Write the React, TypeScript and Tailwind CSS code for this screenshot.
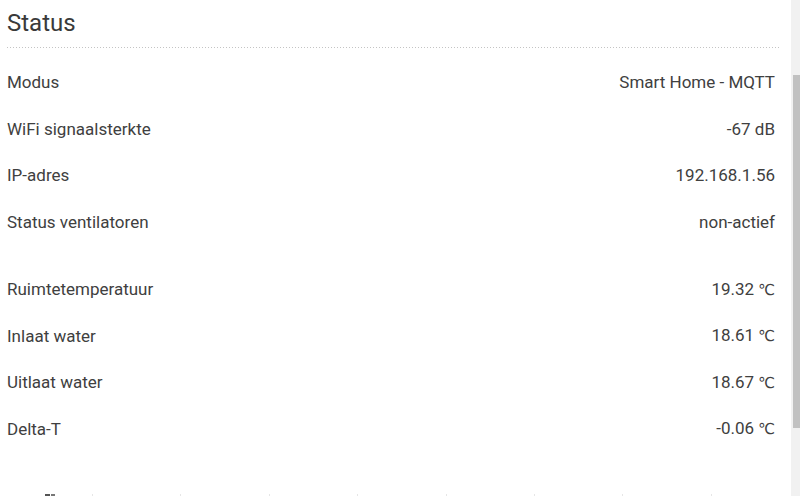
import React from 'react';

interface Row {
  label: string;
  value: string;
  unit?: string;
}

const general: Row[] = [
  { label: 'Modus', value: 'Smart Home - MQTT' },
  { label: 'WiFi signaalsterkte', value: '-67 dB' },
  { label: 'IP-adres', value: '192.168.1.56' },
  { label: 'Status ventilatoren', value: 'non-actief' },
];

const temps: Row[] = [
  { label: 'Ruimtetemperatuur', value: '19.32', unit: '℃' },
  { label: 'Inlaat water', value: '18.61', unit: '℃' },
  { label: 'Uitlaat water', value: '18.67', unit: '℃' },
  { label: 'Delta-T', value: '-0.06', unit: '℃' },
];

const StatusRow: React.FC<Row> = ({ label, value, unit }) => (
  <div className="flex h-[46.5px] items-center justify-between pr-[6px]">
    <span>{label}</span>
    <span>
      {value}
      {unit && <span className="ml-[4px] font-['DejaVu_Sans'] text-[15px]">{unit}</span>}
    </span>
  </div>
);

export default function App() {
  return (
    <div className="flex h-[496px] w-[800px] overflow-hidden bg-white font-['Roboto',sans-serif] text-[#404040]">
      <div className="flex-1 overflow-hidden pl-[7px] pr-[10px] pt-[8px]">
        <h1 className="text-[24px] leading-[30px] text-[#3a3a3a]">Status</h1>
        <div className="mt-[9px] h-px bg-[linear-gradient(to_right,#c4c4c4_1px,transparent_1px)] bg-[length:3px_1px]" />

        <div className="mt-[11px] text-[17px] leading-[24px]">
          {general.map((r) => (
            <StatusRow key={r.label} {...r} />
          ))}
          <div className="h-[21px]" />
          {temps.map((r) => (
            <StatusRow key={r.label} {...r} />
          ))}
        </div>

        <div className="mt-[42px] flex h-[40px]">
          <div className="flex w-[85px] shrink-0 gap-[1px] pl-[38px]">
            <div className="h-[4px] w-[5px] bg-[#555]" />
            <div className="h-[4px] w-[4px] bg-[#777]" />
          </div>
          {Array.from({ length: 8 }).map((_, i) => (
            <div key={i} className="w-[88.4px] shrink-0 border-l border-[#e6e6e6]" />
          ))}
        </div>
      </div>

      <div className="w-[9px] bg-[#f1f1f1] pl-[2px]">
        <div className="mt-[75px] h-[353px] bg-[#c1c1c1]" />
      </div>
    </div>
  );
}
